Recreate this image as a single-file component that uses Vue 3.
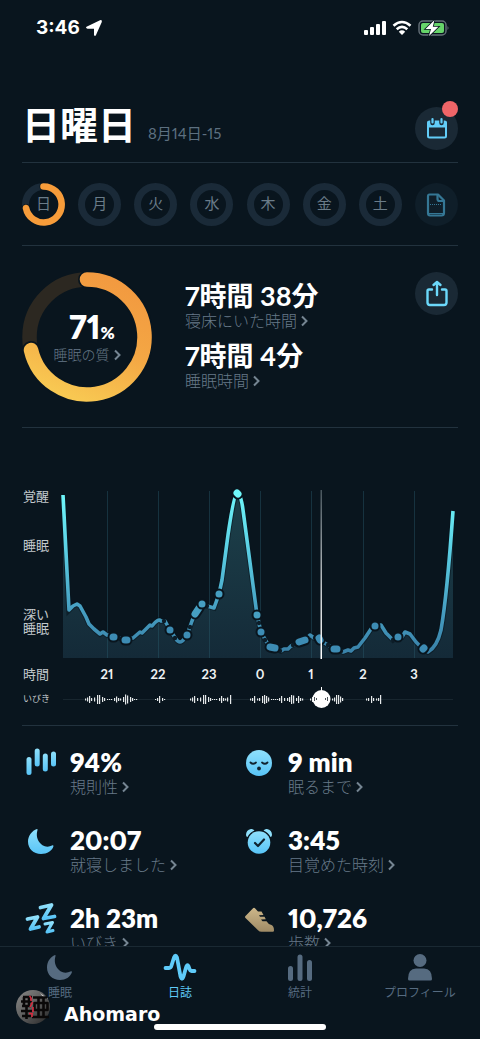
<script setup>
const days = ['日', '月', '火', '水', '木', '金', '土']

const stats = [
  { icon: 'bars', value: '94%', label: '規則性' },
  { icon: 'face', value: '9 min', label: '眠るまで' },
  { icon: 'moon', value: '20:07', label: '就寝しました' },
  { icon: 'alarm', value: '3:45', label: '目覚めた時刻' },
  { icon: 'zzz', value: '2h 23m', label: 'いびき' },
  { icon: 'shoe', value: '10,726', label: '歩数' }
]

const tabs = [
  { icon: 'moon', label: '睡眠' },
  { icon: 'pulse', label: '日誌', active: true },
  { icon: 'chart', label: '統計' },
  { icon: 'person', label: 'プロフィール' }
]

const hours = [
  [107, '21'], [158, '22'], [209, '23'], [260, '0'], [311, '1'], [363, '2'], [414, '3']
]

const curve =
  'M63 495 L69 610 L73 606 L77 604 L80 606 L86 617 L89 624 L94 629 L100 634 L103 632 L107 635 L114 637 L120 638 L126 640 L133 638 L140 632 L142 633 L150 625 L152 626 Q158 618 161 621 L165 621 L170 630 L176 639 Q180 645 184 639 L187 635 L192 621 L196 611 L202 604 L207 606 L214 608 L219 594 L222 580 L228 535 Q234 494 237 493 Q241 494 243 510 L249 555 L257 615 L261 632 L266 641 L270 647 L276 648 L281 651 L284 649 L288 649 L291 646 L298 643 L305 640 L310 635 L314 638 L319 638 L323 642 L331 647 L338 649 L343 652 L348 650 L351 651 L354 648 L358 647 L365 638 L371 629 L375 626 L381 625 L386 633 L393 640 L398 637 L402 637 L405 632 L410 634 L416 642 L422 648 L428 652 Q437 647 441 630 Q447 596 453 511'

const marks = [
  [113, 637, 114, 637], [125, 640, 127, 640], [170, 630, 170, 630], [187, 635, 187, 635],
  [195, 614, 199, 608], [202, 604, 202, 604], [219, 594, 219, 594], [237, 493, 238, 494],
  [257, 615, 257, 615], [261, 632, 261, 632], [270, 647, 275, 648], [299, 642, 305, 640],
  [319, 638, 320, 640], [334, 649, 337, 649], [375, 626, 375, 626], [398, 637, 398, 637],
  [423, 649, 424, 648]
]

const gaps = [
  [119, 638], [164, 621], [175, 638], [190, 627], [207, 606],
  [259, 623], [265, 640], [280, 651], [293, 645], [315, 638], [328, 645],
  [341, 651], [393, 640]
]

const snores = [
  [85, 2], [87, 4], [89, 7], [91, 3], [94, 4], [97, 9], [99, 9], [102, 5], [104, 3], [107, 1],
  [109, 1], [111, 1], [114, 3], [116, 6], [118, 3], [120, 2], [123, 5], [125, 10], [127, 8],
  [130, 5], [132, 3], [134, 1], [136, 1],
  [155, 1], [157, 3], [159, 7], [162, 3], [164, 1],
  [190, 2], [192, 4], [194, 7], [197, 3], [200, 4], [203, 9], [205, 9], [208, 5], [210, 3],
  [212, 1], [214, 1], [216, 1], [219, 3], [221, 7], [223, 3], [225, 2], [227, 4], [230, 9],
  [250, 2], [252, 3], [254, 7], [257, 2], [259, 3], [262, 7], [264, 9], [266, 7], [268, 4],
  [271, 1], [273, 1], [275, 1], [277, 1], [279, 3], [281, 7], [284, 3], [287, 3], [289, 5],
  [291, 9], [293, 8], [296, 3], [298, 7], [300, 3], [302, 2],
  [310, 2], [312, 5], [332, 2], [334, 4], [336, 9], [338, 9], [340, 6], [342, 3],
  [366, 2], [368, 3], [371, 7], [373, 3], [376, 2], [378, 3], [380, 9]
]
</script>

<template>
  <div class="app">
    <header class="status">
      <div class="clock">
        <span>3:46</span>
        <svg width="18" height="18" viewBox="0 0 18 18" aria-hidden="true">
          <path d="M1.500 7.800 L15 1.200 Q17.400 .6 16.800 3 L11 16 Q10 18 9 16 V9.800 H2.500 Q.2 9 1.500 7.800Z" fill="#fff" />
        </svg>
      </div>
      <div class="signals">
        <svg width="24" height="16" viewBox="0 0 24 16" aria-hidden="true">
          <g fill="#fff">
            <rect x="1" y="10" width="4" height="5" rx="1" />
            <rect x="7" y="7" width="4" height="8" rx="1" />
            <rect x="13" y="4" width="4" height="11" rx="1" />
            <rect x="19" y="1" width="4" height="14" rx="1" />
          </g>
        </svg>
        <svg width="20" height="16" viewBox="0 0 20 16" aria-hidden="true">
          <g fill="none" stroke="#fff" stroke-width="2.600">
            <path d="M1.500 5.800 Q10 -1.800 18.500 5.800" />
            <path d="M4.700 9.300 Q10 4.500 15.300 9.300" />
          </g>
          <path d="M6.800 11.700 Q10 8.900 13.200 11.700 L10 15Z" fill="#fff" />
        </svg>
        <svg width="32" height="18" viewBox="0 0 32 18" aria-hidden="true">
          <rect x="2" y="2" width="27" height="14" rx="4" fill="none" stroke="#66717a" stroke-width="1.400" />
          <rect x="4" y="4" width="23" height="10" rx="2" fill="#66d46a" />
          <path d="M30.500 7 Q32.500 9 30.500 11Z" fill="#66717a" />
          <path d="M17.500 1 L8.500 10 H14 L12 17 L21.500 7.800 H15.800Z" fill="#fff" stroke="#09151e" stroke-width="1.600" paint-order="stroke" />
        </svg>
      </div>
    </header>

    <main class="content">
      <section class="heading">
        <div class="title">
          <h1>日曜日</h1>
          <span class="date">8月14日-15</span>
        </div>
        <button class="round" aria-label="カレンダー">
          <svg width="24" height="24" viewBox="0 0 24 24">
            <rect x="3" y="4.500" width="18" height="16" rx="1.500" fill="none" stroke="#62cdf8" stroke-width="2" />
            <rect x="2.500" y="4" width="19" height="6.500" rx="1" fill="#62cdf8" />
            <path d="M7.500 2 V6 M16.500 2 V6" stroke="#1a2935" stroke-width="4.500" stroke-linecap="round" />
            <path d="M7.500 2 V5.500 M16.500 2 V5.500" stroke="#62cdf8" stroke-width="2.200" stroke-linecap="round" />
          </svg>
          <i class="badge"></i>
        </button>
      </section>

      <section class="days">
        <button v-for="(day, i) in days" :key="day" class="day">
          <svg viewBox="0 0 43 43" aria-hidden="true">
            <circle cx="21.500" cy="21.500" r="18" fill="none" stroke="#1a2a38" stroke-width="7" />
            <template v-if="i === 0">
              <path d="M21.500 3.500 A18 18 0 1 1 4 25" fill="none" stroke="#09151e" stroke-width="8" stroke-linecap="round" />
              <path d="M21.500 3.500 A18 18 0 1 1 4 25" fill="none" stroke="#f79c3a" stroke-width="6.600" stroke-linecap="round" />
            </template>
          </svg>
          <span>{{ day }}</span>
        </button>
        <button class="round dim" aria-label="メモ">
          <svg width="24" height="26" viewBox="0 0 24 26">
            <g fill="none" stroke="#357795" stroke-width="2.200" stroke-linejoin="round">
              <path d="M5.500 2.500 H14 L20 8.500 V21 Q20 23.500 17.500 23.500 H6 Q4 23.500 4 21 V4.500 Q4 2.500 5.500 2.500Z" />
              <path d="M13.500 3 V7 Q13.500 9 15.500 9 H19.500" />
              <path d="M5 21.500 H19" stroke-width="1" />
              <path d="M6 12.500 H18" stroke-width="1" stroke-dasharray="1 1" />
            </g>
          </svg>
        </button>
      </section>

      <section class="summary">
        <div class="quality">
          <svg viewBox="0 0 130 130" aria-hidden="true">
            <defs>
              <linearGradient id="ring" x1="0.700" y1="0" x2="0.300" y2="1">
                <stop offset="0" stop-color="#f29a40" />
                <stop offset="0.500" stop-color="#f4a744" />
                <stop offset="1" stop-color="#f8c852" />
              </linearGradient>
            </defs>
            <circle cx="65" cy="65" r="57.500" fill="none" stroke="#2c2821" stroke-width="14.500" />
            <path d="M65 7.500 A57.500 57.500 0 1 1 9 78" fill="none" stroke="#09151e" stroke-width="18" stroke-linecap="round" />
            <path d="M65 7.500 A57.500 57.500 0 1 1 9 78" fill="none" stroke="url(#ring)" stroke-width="14.500" stroke-linecap="round" />
          </svg>
          <div class="quality-text">
            <strong>71<small>%</small></strong>
            <a href="#quality" class="more small">睡眠の質<svg class="chev" viewBox="0 0 8 12"><path d="M2 1.500 L6.500 6 L2 10.500" /></svg></a>
          </div>
        </div>
        <div class="times">
          <div>
            <strong>7時間 38分</strong>
            <a href="#in-bed" class="more">寝床にいた時間<svg class="chev" viewBox="0 0 8 12"><path d="M2 1.500 L6.500 6 L2 10.500" /></svg></a>
          </div>
          <div>
            <strong>7時間 4分</strong>
            <a href="#asleep" class="more">睡眠時間<svg class="chev" viewBox="0 0 8 12"><path d="M2 1.500 L6.500 6 L2 10.500" /></svg></a>
          </div>
        </div>
        <button class="round" aria-label="共有">
          <svg width="26" height="28" viewBox="0 0 26 28">
            <g fill="none" stroke="#6cd9fb" stroke-width="2.400" stroke-linecap="round" stroke-linejoin="round">
              <path d="M8 9.500 H5 Q3.500 9.500 3.500 11 V22.500 Q3.500 25 6 25 H20 Q22.500 25 22.500 22.500 V11 Q22.500 9.500 21 9.500 H18" />
              <path d="M13 15 V2.500 M9.500 5 L13 2 L16.500 5" />
            </g>
          </svg>
        </button>
      </section>

      <section class="graph">
        <svg viewBox="22 485 436 227" role="img" aria-label="睡眠グラフ">
          <defs>
            <linearGradient id="line" gradientUnits="userSpaceOnUse" x1="0" y1="490" x2="0" y2="650">
              <stop offset="0" stop-color="#6ff8fb" />
              <stop offset="0.350" stop-color="#5cd2e6" />
              <stop offset="0.750" stop-color="#469fc2" />
              <stop offset="1" stop-color="#3a83aa" />
            </linearGradient>
            <linearGradient id="area" gradientUnits="userSpaceOnUse" x1="0" y1="490" x2="0" y2="658">
              <stop offset="0" stop-color="#1d414b" />
              <stop offset="1" stop-color="#142a38" />
            </linearGradient>
            <linearGradient id="cursor" gradientUnits="userSpaceOnUse" x1="0" y1="490" x2="0" y2="658">
              <stop offset="0" stop-color="#47545c" />
              <stop offset="0.600" stop-color="#c4c9cc" />
              <stop offset="1" stop-color="#fff" />
            </linearGradient>
          </defs>
          <path :d="curve + ' V658 H63 Z'" fill="url(#area)" />
          <path v-for="h in hours" :key="h[1]" :d="`M${h[0]}.500 491 V658`" stroke="#2b6070" stroke-opacity="0.400" />
          <path :d="curve" fill="none" stroke="#09151e" stroke-opacity="0.600" stroke-width="5.500" />
          <path :d="curve" fill="none" stroke="url(#line)" stroke-width="3.600" stroke-linejoin="round" />
          <circle v-for="g in gaps" :key="g[0]" :cx="g[0]" :cy="g[1]" r="2.200" fill="#0d1d28" />
          <g stroke-linecap="round">
            <template v-for="m in marks" :key="m[0]">
              <path :d="`M${m[0]} ${m[1]} L${m[2] + 0.01} ${m[3]}`" stroke="#09151e" stroke-width="11" />
              <path :d="`M${m[0]} ${m[1]} L${m[2] + 0.01} ${m[3]}`" :stroke="m[1] < 500 ? '#6ff8fb' : m[1] < 620 ? '#469fc2' : '#3d8cb4'" stroke-width="7" />
            </template>
          </g>
          <rect x="320.500" y="490" width="1.500" height="169" fill="url(#cursor)" />
          <g class="axis">
            <text x="23" y="501">覚醒</text>
            <text x="23" y="550">睡眠</text>
            <text x="23" y="619">深い</text>
            <text x="23" y="633">睡眠</text>
            <text x="23" y="679">時間</text>
            <text x="23" y="702" class="tiny">いびき</text>
          </g>
          <text v-for="h in hours" :key="h[1]" class="hour" :x="h[0]" y="679">{{ h[1] }}</text>
          <path d="M63 699.500 H453" stroke="#18262f" />
          <rect v-for="s in snores" :key="s[0]" :x="s[0]" :y="699.5 - s[1] / 2" width="1.200" :height="s[1]" fill="#e6e9ea" />
          <circle cx="321.500" cy="699" r="9" fill="#fff" />
          <path d="M321.500 687 V692" stroke="#fff" />
          <path d="M314.500 697 V701 M316.500 698 V700 M325.500 698 V700 M327.500 697 V701" stroke="#4b5358" />
        </svg>
      </section>

      <section class="stats">
        <div v-for="s in stats" :key="s.icon" class="stat">
          <svg class="stat-icon" viewBox="0 0 32 32" aria-hidden="true">
            <defs>
              <linearGradient :id="'g-' + s.icon" x1="0" y1="0" x2="0" y2="1">
                <stop offset="0" stop-color="#8fe0fb" />
                <stop offset="1" stop-color="#58c4f7" />
              </linearGradient>
              <linearGradient id="tan" x1="0" y1="0" x2="0" y2="1">
                <stop offset="0" stop-color="#cdb78a" />
                <stop offset="1" stop-color="#9f8b66" />
              </linearGradient>
            </defs>
            <g v-if="s.icon === 'bars'" fill="url(#g-bars)">
              <rect x="1.500" y="11" width="5" height="18" rx="2.500" />
              <rect x="9.700" y="2.500" width="5" height="18" rx="2.500" />
              <rect x="17.800" y="7.500" width="5" height="18" rx="2.500" />
              <rect x="26" y="5.500" width="5" height="15" rx="2.500" />
            </g>
            <g v-else-if="s.icon === 'face'">
              <circle cx="16" cy="17" r="13" fill="url(#g-face)" />
              <path d="M7.500 16.500 Q10 19 13 16.500 M19 16.500 Q22 19 24.500 16.500" fill="none" stroke="#10222e" stroke-width="1.800" stroke-linecap="round" />
              <circle cx="16" cy="22.500" r="1.900" fill="#10222e" />
            </g>
            <path v-else-if="s.icon === 'moon'" d="M12 5 C7 6.500 3 12 3 17.500 C3 25 8.500 30 16 30 C22 30 27.500 26.500 28.500 22 C28.500 21 27.500 21 27 21.500 C23.500 23.500 19 22.800 16 20 C12 16.500 11 11 12.500 6 C12.500 5.200 12.500 5 12 5Z" fill="url(#g-moon)" />
            <g v-else-if="s.icon === 'alarm'">
              <path d="M3 11 Q3 6 8 5 Q10 4.600 11.500 6.500 Q6.500 8.500 4.500 13 Q3.200 13 3 11Z M29 11 Q29 6 24 5 Q22 4.600 20.500 6.500 Q25.500 8.500 27.500 13 Q28.800 13 29 11Z" fill="#8fe0fb" />
              <circle cx="16" cy="18.500" r="11.300" fill="url(#g-alarm)" />
              <path d="M12 19 L15 22 L21 15.500" fill="none" stroke="#10222e" stroke-width="2.200" stroke-linecap="round" stroke-linejoin="round" />
            </g>
            <g v-else-if="s.icon === 'zzz'" fill="none" stroke="url(#g-zzz)" stroke-linecap="round" stroke-linejoin="round">
              <path d="M15.500 5.500 L26.500 3 L18.500 16.500 L29.500 14.500" stroke-width="3.800" />
              <path d="M2.500 17 L12.500 15 L5.500 27 L14 25" stroke-width="3.800" />
              <path d="M20 22 L27.500 20.500 L22 30 L28 28.500" stroke-width="3" />
            </g>
            <path v-else d="M9.800 6.500 Q11 5 12.200 6.500 L15 9.500 H18.500 L20.500 13 L16 13.300 L17 14.700 H21.500 L22.800 17.200 L18 17.600 L19.500 19.200 H23.500 Q25 22 28.500 23 Q31 24 31 28.500 Q31 29.700 29.800 29.700 H18.500 Q16.500 29.700 15 28.200 L2.500 16 Q1.500 15 2.500 14Z" fill="url(#tan)" />
          </svg>
          <div>
            <strong>{{ s.value }}</strong>
            <a :href="'#' + s.icon" class="more">{{ s.label }}<svg class="chev" viewBox="0 0 8 12"><path d="M2 1.500 L6.500 6 L2 10.500" /></svg></a>
          </div>
        </div>
      </section>
    </main>

    <nav class="tabs">
      <a v-for="t in tabs" :key="t.label" href="#" class="tab" :class="{ active: t.active }">
        <svg width="34" height="28" viewBox="0 0 34 28" aria-hidden="true">
          <path v-if="t.icon === 'moon'" d="M12 2 C8 3.500 4 8 4 14.500 C4 22 9.500 27 17 27 C22.500 27 27.500 24 29 19 C29 18 28 18 27.500 18.500 C23.500 20.500 19 19.800 16 17 C12 13.500 11 8 12.500 3 C12.500 2.200 12.500 2 12 2Z" fill="currentColor" />
          <path v-else-if="t.icon === 'pulse'" d="M2.500 15 H6 Q8 15 8.500 12.500 L11 4.500 Q12.500 1 14 4.500 L17.500 23.500 Q19 28 20.500 23.500 L23 14.500 Q24.500 10 26 14.500 Q27 18 28.500 18 H31.500" fill="none" stroke="currentColor" stroke-width="3.800" stroke-linecap="round" stroke-linejoin="round" />
          <g v-else-if="t.icon === 'chart'" fill="currentColor">
            <rect x="5" y="13" width="5" height="15" rx="2.500" />
            <rect x="14.500" y="1.500" width="5" height="26.500" rx="2.500" />
            <rect x="24" y="7" width="5" height="21" rx="2.500" />
          </g>
          <g v-else fill="currentColor">
            <circle cx="17" cy="7.500" r="6.500" />
            <path d="M5 26 Q5 15.500 13 15.500 H21 Q29 15.500 29 26 Q29 27.500 27.500 27.500 H6.500 Q5 27.500 5 26Z" />
          </g>
        </svg>
        <span>{{ t.label }}</span>
      </a>
      <div class="home"></div>
      <div class="credit">
        <svg width="36" height="36" viewBox="0 0 36 36" aria-hidden="true">
          <defs>
            <linearGradient id="seal" x1="0" y1="0" x2="1" y2="1">
              <stop offset="0" stop-color="#8a8a88" />
              <stop offset="0.500" stop-color="#5c5c5c" />
              <stop offset="1" stop-color="#262626" />
            </linearGradient>
          </defs>
          <circle cx="18" cy="18" r="17" fill="url(#seal)" />
          <path d="M25 4 L33 10 L29 9Z" fill="#d8d8d8" />
          <g fill="none" stroke="#0a0808" stroke-width="2.600" stroke-linejoin="round">
            <path d="M8 8 H17 M6 12.500 H17 M7 17 H16 M6 22 H17 M7 27 H16 M9 8 V18 M14 8 V18 M11.500 17 V30" />
            <path d="M18 8.500 H32 M19.500 14 H32.500 V21 H19.500Z M17 28 H34 M23.500 8.500 V28 M28.500 8.500 V28" />
          </g>
          <path d="M14.500 7 Q17 9 16 12 M17.500 13 L15 18 M18 18 V23 M14 24.500 H18 M17 25 V28" fill="none" stroke="#d9293c" stroke-width="1.600" />
        </svg>
        <span>Ahomaro</span>
      </div>
    </nav>
  </div>
</template>

<style>
body {
  background: #09151e;
}
</style>

<style scoped>
.app {
  height: 100vh;
  display: flex;
  flex-direction: column;
  background: #09151e;
  color: #fff;
  font-family: Lato, "Noto Sans CJK JP", sans-serif;
  font-variant-numeric: proportional-nums;
}
button {
  border: 0;
  padding: 0;
  background: none;
  font-family: inherit;
  cursor: pointer;
}
a {
  text-decoration: none;
}
.status {
  flex: none;
  box-sizing: border-box;
  height: 54px;
  padding: 1px 31px 0 36px;
  display: flex;
  justify-content: space-between;
  align-items: center;
}
.clock,
.signals {
  display: flex;
  align-items: center;
  gap: 5px;
}
.clock {
  font: 700 19px/24px Inter, sans-serif;
}
.content {
  flex: 1;
  min-height: 0;
  overflow-y: auto;
  scrollbar-width: none;
  padding: 0 22px;
}
.heading,
.days,
.summary,
.graph {
  border-bottom: 1px solid #22323e;
}
.heading {
  display: flex;
  justify-content: space-between;
  padding: 53px 0 12px;
}
.title {
  display: flex;
  align-items: baseline;
  gap: 12px;
}
h1 {
  margin: 0;
  font-size: 38px;
  font-weight: 700;
  line-height: 34px;
}
.date {
  font-size: 15px;
  line-height: 20px;
  color: #5d7080;
}
.round {
  position: relative;
  flex: none;
  width: 43px;
  height: 43px;
  border-radius: 50%;
  background: #1a2935;
  display: grid;
  place-items: center;
}
.dim {
  background: #0f1e29;
}
.badge {
  position: absolute;
  top: -6px;
  right: 0;
  width: 16px;
  height: 16px;
  border-radius: 50%;
  background: #ef6568;
}
.days {
  display: flex;
  justify-content: space-between;
  padding: 20px 0 19px;
}
.day {
  width: 43px;
  height: 43px;
  display: grid;
  place-items: center;
  color: #6a7c89;
  font-size: 15px;
  line-height: 20px;
}
.day > * {
  grid-area: 1 / 1;
}
.day svg {
  width: 43px;
  height: 43px;
}
.day span {
  padding-bottom: 4px;
}
.summary {
  display: flex;
  align-items: flex-start;
  padding: 26px 0 25px;
}
.quality {
  flex: none;
  width: 130px;
  height: 130px;
  display: grid;
  place-items: center;
}
.quality > * {
  grid-area: 1 / 1;
}
.quality-text {
  padding-top: 4px;
  text-align: center;
}
.quality-text strong {
  display: block;
  padding-left: 10px;
  font-size: 32px;
  font-weight: 800;
  line-height: 26px;
}
.quality-text small {
  font-size: 17px;
}
.times {
  flex: 1;
  padding: 10px 0 0 33px;
  display: grid;
  gap: 10px;
}
.times strong,
.stat strong {
  display: block;
  font-size: 26px;
  font-weight: 800;
  line-height: 28px;
}
.times strong {
  font-size: 27px;
  font-weight: 700;
}
.more {
  display: flex;
  align-items: center;
  gap: 3px;
  font-size: 16px;
  font-weight: 300;
  line-height: 22px;
  color: #677988;
}
.small {
  font-size: 14px;
  line-height: 18px;
}
.chev {
  width: 8px;
  height: 12px;
  fill: none;
  stroke: #758592;
  stroke-width: 2;
}
.graph {
  padding: 57px 0 13px;
}
.graph svg {
  display: block;
  width: 100%;
}
.axis {
  fill: #c3c9cd;
  font-size: 13px;
}
.tiny {
  font-size: 9px;
}
.hour {
  fill: #eef1f2;
  font-size: 13px;
  font-weight: 700;
  text-anchor: middle;
}
.stats {
  display: grid;
  grid-template-columns: 1fr 1fr;
  gap: 28px 0;
  padding: 22px 0;
}
.stat {
  display: flex;
  gap: 13px;
  padding-left: 3px;
}
.stat-icon {
  flex: none;
  width: 32px;
  height: 32px;
  margin-top: -2px;
}
.tabs {
  position: relative;
  flex: none;
  height: 92px;
  border-top: 1px solid #1a2933;
  display: grid;
  grid-template-columns: repeat(4, 1fr);
}
.tab {
  display: flex;
  flex-direction: column;
  align-items: center;
  gap: 2px;
  padding-top: 6px;
  color: #566b80;
  font-size: 12px;
  line-height: 20px;
}
.active {
  color: #5fcbf9;
}
.home {
  position: absolute;
  left: 50%;
  bottom: 9px;
  width: 172px;
  height: 6px;
  margin-left: -86px;
  border-radius: 3px;
  background: #fff;
}
.credit {
  position: absolute;
  left: 15px;
  bottom: 13px;
  display: flex;
  align-items: center;
  gap: 13px;
  font: 700 19px/24px "DejaVu Sans", sans-serif;
}
.credit span {
  padding-top: 14px;
}
</style>
